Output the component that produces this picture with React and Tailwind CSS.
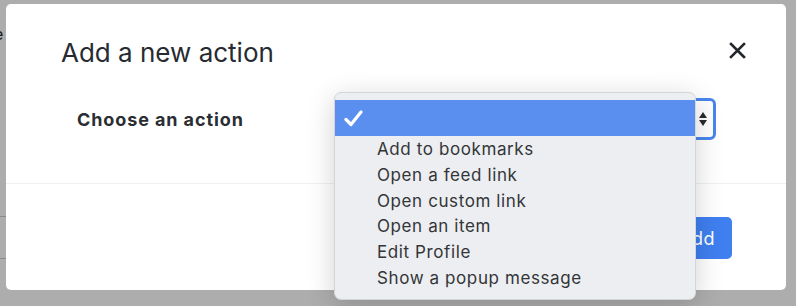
import React from "react";

const options = [
  "Add to bookmarks",
  "Open a feed link",
  "Open custom link",
  "Open an item",
  "Edit Profile",
  "Show a popup message",
];

const App = () => {
  return (
    <div
      className="relative w-[796px] h-[306px] overflow-hidden bg-[#adadad]"
      style={{ fontFamily: "Inter, 'Noto Sans', sans-serif" }}
    >
      {/* page behind the backdrop */}
      <div className="absolute left-[-6px] top-[22px] text-[16px] text-[#1c1c1c]">e</div>
      <div className="absolute left-0 top-[216px] w-[6px] h-px bg-[#8a8a8a]"></div>
      <div className="absolute left-0 top-[258px] w-[6px] h-px bg-[#8a8a8a]"></div>

      {/* modal */}
      <div className="absolute left-[6px] top-[4px] w-[780px] h-[286px] bg-white rounded-[5px] flex flex-col">
        <div className="flex items-start justify-between pl-[55px] pr-[40px] pt-[33px]">
          <h5 className="text-[26px] leading-[32px] text-[#272b31] font-normal">Add a new action</h5>
          <button className="mt-[5px] w-[17px] h-[17px] flex items-center justify-center">
            <svg width="17" height="17" viewBox="0 0 17 17">
              <path d="M2 2 L15 15 M15 2 L2 15" stroke="#23272b" strokeWidth="2.6" strokeLinecap="square" />
            </svg>
          </button>
        </div>

        <div className="flex items-center pl-[71px] pr-[70px] pt-[29px] pb-[43px]">
          <label className="w-[260px] text-[18px] tracking-[0.9px] font-bold text-[#2a2e33]">Choose an action</label>
          <div className="relative flex-1 h-[42px] rounded-[6px] border-[3px] border-[#4a86ec] bg-white">
            <div className="absolute right-[6px] top-[11px] flex flex-col items-center gap-[2px]">
              <svg width="8" height="6" viewBox="0 0 8 6">
                <path d="M4 0 L8 6 L0 6 Z" fill="#2b2b2b" />
              </svg>
              <svg width="8" height="6" viewBox="0 0 8 6">
                <path d="M0 0 L8 0 L4 6 Z" fill="#2b2b2b" />
              </svg>
            </div>
          </div>
        </div>

        <div className="flex-1 border-t border-[#eef0f2] flex items-start justify-end pt-[33px] pr-[54px]">
          <button className="h-[42px] px-[17px] rounded-[5px] bg-[#3f7ff0] text-white text-[18px] tracking-[0.5px]">Add</button>
        </div>
      </div>

      {/* native select popup */}
      <div className="absolute left-[334px] top-[92px] w-[362px] h-[208px] rounded-[7px] bg-[#eceef1] border border-[#d3d5d9] shadow-[0_6px_28px_rgba(0,0,0,0.18)] pt-[7px] overflow-hidden">
        <div className="h-[36px] bg-[#5b8fef] flex items-center pl-[9px]">
          <svg width="19" height="17" viewBox="0 0 19 17">
            <path d="M2 9.5 L7 14.5 L17 2" stroke="white" strokeWidth="3.2" fill="none" strokeLinecap="round" strokeLinejoin="round" />
          </svg>
        </div>
        <ul className="pt-[1px]">
          {options.map((o) => (
            <li key={o} className="h-[25.8px] leading-[25.8px] pl-[42px] text-[17px] tracking-[0.6px] text-[#333538]">
              {o}
            </li>
          ))}
        </ul>
      </div>
    </div>
  );
};

export default App;
